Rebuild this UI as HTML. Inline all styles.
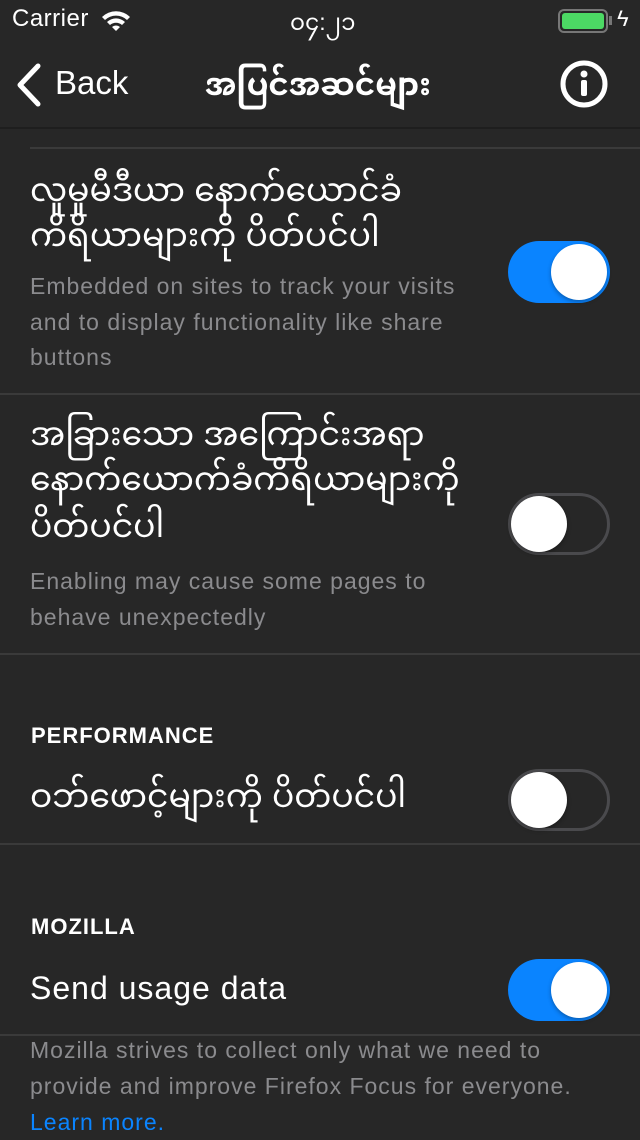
<!DOCTYPE html>
<html><head><meta charset="utf-8"><style>
*{margin:0;padding:0;box-sizing:border-box}
body{width:640px;height:1136px;background:#272727;color:#fff;font-family:"Liberation Sans","Noto Sans Myanmar","Padauk","Myanmar Text",sans-serif;position:relative;overflow:hidden}
.a{position:absolute;white-space:nowrap}
.sep{position:absolute;height:2px;background:#3a3a3a;right:0}
.t{font-size:33px;line-height:44px}
.d{font-size:23px;line-height:36px;color:#8b8b8e;letter-spacing:1px}
.h{font-size:22px;font-weight:bold;letter-spacing:1px;color:#fff}
.tg{position:absolute;left:508px;width:102px;height:62px;border-radius:31px}
.tg.on{background:#0a84ff}
.tg.off{border:3px solid #4a4a4d;background:#272727}
.tg i{position:absolute;top:3px;width:56px;height:56px;border-radius:50%;background:#fff;box-shadow:0 2px 4px rgba(0,0,0,.3)}
.tg.on i{right:3px}
.tg.off i{left:0;top:0}
</style></head><body>
<div class="a" style="left:12px;top:5px;font-size:24px;letter-spacing:.5px">Carrier</div>
<svg class="a" style="left:100px;top:8px" width="32" height="24" viewBox="0 0 32 24"><path d="M2 9a20 20 0 0 1 28 0l-3 3a16 16 0 0 0-22 0z M7 14a13 13 0 0 1 18 0l-3 3a9 9 0 0 0-12 0z M12 19a6 6 0 0 1 8 0l-4 4z" fill="#fff"/></svg>
<div class="a" style="left:290px;top:0px;font-size:23px">၀၄:၂၁</div>
<div class="a" style="left:558px;top:9px;width:50px;height:24px;border:2px solid #777;border-radius:6px"><div style="position:absolute;left:2px;top:2px;width:42px;height:16px;background:#4cd964;border-radius:3px"></div></div>
<div class="a" style="left:609px;top:16px;width:3px;height:9px;background:#777"></div>
<div class="a" style="left:617px;top:6px;font-size:22px">ϟ</div>
<svg class="a" style="left:14px;top:62px" width="30" height="46" viewBox="0 0 30 46"><path d="M24 4L6 23l18 19" stroke="#fff" stroke-width="5" fill="none" stroke-linecap="round" stroke-linejoin="round"/></svg>
<div class="a" style="left:55px;top:64px;font-size:33px">Back</div>
<div class="a" style="left:205px;top:54px;font-size:31px;font-weight:bold">အပြင်အဆင်များ</div>
<svg class="a" style="left:558px;top:58px" width="52" height="52" viewBox="0 0 52 52"><circle cx="26" cy="26" r="21" stroke="#fff" stroke-width="5" fill="none"/><circle cx="26" cy="16" r="3.5" fill="#fff"/><rect x="23" y="22" width="6" height="16" rx="2" fill="#fff"/></svg>
<div class="sep" style="left:0;top:127px;background:#1e1e1e"></div>
<div class="sep" style="left:30px;top:147px"></div>
<div class="a t" style="left:30px;top:168px">လူမှုမီဒီယာ နောက်ယောင်ခံ</div>
<div class="a t" style="left:30px;top:213px">ကိရိယာများကို ပိတ်ပင်ပါ</div>
<div class="a d" style="left:30px;top:268px">Embedded on sites to track your visits</div>
<div class="a d" style="left:30px;top:304px">and to display functionality like share</div>
<div class="a d" style="left:30px;top:339px">buttons</div>
<div class="tg on" style="top:241px"><i></i></div>
<div class="sep" style="left:0;top:393px"></div>
<div class="a t" style="left:30px;top:412px">အခြားသော အကြောင်းအရာ</div>
<div class="a t" style="left:30px;top:457px">နောက်ယောက်ခံကိရိယာများကို</div>
<div class="a t" style="left:30px;top:504px">ပိတ်ပင်ပါ</div>
<div class="a d" style="left:30px;top:563px">Enabling may cause some pages to</div>
<div class="a d" style="left:30px;top:599px">behave unexpectedly</div>
<div class="tg off" style="top:493px"><i></i></div>
<div class="sep" style="left:0;top:653px"></div>
<div class="a h" style="left:31px;top:723px">PERFORMANCE</div>
<div class="a t" style="left:30px;top:774px">ဝဘ်ဖောင့်များကို ပိတ်ပင်ပါ</div>
<div class="tg off" style="top:769px"><i></i></div>
<div class="sep" style="left:0;top:843px"></div>
<div class="a h" style="left:31px;top:914px">MOZILLA</div>
<div class="a" style="left:30px;top:970px;font-size:32px;letter-spacing:1px">Send usage data</div>
<div class="tg on" style="top:959px"><i></i></div>
<div class="sep" style="left:0;top:1034px"></div>
<div class="a d" style="left:30px;top:1032px">Mozilla strives to collect only what we need to</div>
<div class="a d" style="left:30px;top:1068px">provide and improve Firefox Focus for everyone.</div>
<div class="a d" style="left:30px;top:1104px;color:#0a84ff">Learn more.</div>
</body></html>
